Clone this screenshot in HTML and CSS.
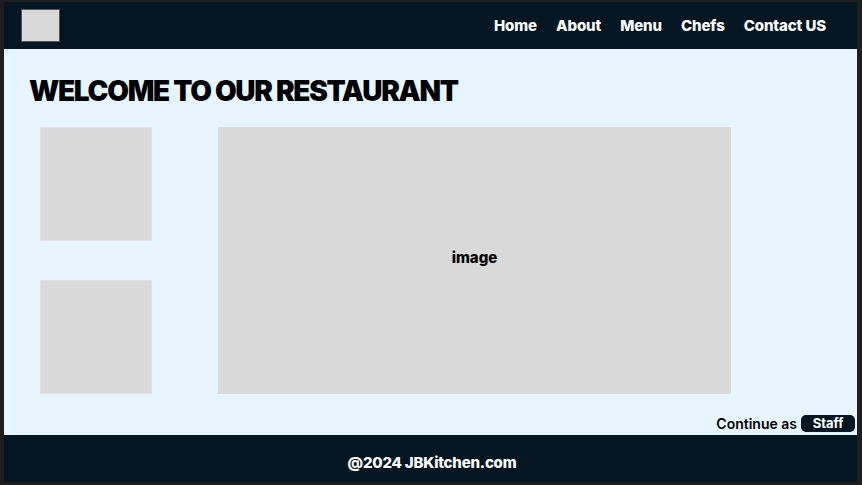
FILE: index.html
```html
<!DOCTYPE html>
<html lang="en">
<head>
<meta charset="utf-8">
<title>JBKitchen</title>
<link rel="stylesheet" href="styles.css">
</head>
<body>
<div class="frame">
  <header class="topbar">
    <div class="logo"></div>
    <nav class="nav">
      <a href="#">Home</a>
      <a href="#">About</a>
      <a href="#">Menu</a>
      <a href="#">Chefs</a>
      <a href="#">Contact US</a>
    </nav>
  </header>
  <main class="main">
    <h1 class="title">WELCOME TO OUR RESTAURANT</h1>
    <section class="gallery">
      <div class="thumbs">
        <div class="thumb"></div>
        <div class="thumb"></div>
      </div>
      <div class="hero">image</div>
    </section>
    <div class="continue">
      <span>Continue as</span>
      <button class="staff">Staff</button>
    </div>
  </main>
  <footer class="footer">@2024 JBKitchen.com</footer>
</div>
</body>
</html>
```

FILE: styles.css
```css
* { box-sizing: border-box; }
html, body { margin: 0; height: 100%; }
body {
  background: #1f1e1c;
  padding: 2px 5px 3px 4px;
  font-family: Inter, "Open Sans", sans-serif;
}
.frame {
  height: 100%;
  display: flex;
  flex-direction: column;
}
.topbar {
  height: 47px;
  background: #041622;
  display: flex;
  align-items: center;
  justify-content: space-between;
  padding: 0 31px 0 17px;
}
.logo {
  width: 39px;
  height: 33px;
  background: #d9d9d9;
  border: 1px solid #555;
  margin-top: -1px;
}
.nav {
  display: flex;
  gap: 19px;
}
.nav a {
  color: #fff;
  text-decoration: none;
  font-weight: 800;
  font-size: 15px;
  letter-spacing: -0.1px;
}
.main {
  flex: 1;
  background: #e6f5fd;
  display: flex;
  flex-direction: column;
  padding: 28px 2px 3px 25px;
}
.title {
  margin: 0;
  font-size: 28px;
  line-height: 29px;
  font-weight: 900;
  letter-spacing: -1.3px;
  color: #000;
}
.gallery {
  display: flex;
  gap: 66px;
  margin: 21px 0 0 11px;
}
.thumbs {
  display: flex;
  flex-direction: column;
  gap: 39px;
}
.thumb {
  width: 112px;
  height: 114px;
  background: #d9d9d9;
  border: 1px solid #e0e0e0;
}
.hero {
  width: 513px;
  height: 267px;
  background: #d9d9d9;
  display: flex;
  align-items: center;
  justify-content: center;
  font-weight: 800;
  font-size: 15px;
  color: #000;
  padding-bottom: 7px;
}
.continue {
  margin-top: auto;
  display: flex;
  justify-content: flex-end;
  align-items: center;
  gap: 4px;
  font-size: 14px;
  font-weight: 600;
  color: #000;
}
.staff {
  width: 54px;
  height: 17px;
  border: none;
  border-radius: 5px;
  background: #041622;
  color: #fff;
  font-family: inherit;
  font-weight: 700;
  font-size: 13px;
  padding: 0;
  line-height: 17px;
}
.footer {
  height: 47px;
  background: #041622;
  color: #fff;
  font-weight: 800;
  font-size: 15px;
  letter-spacing: -0.2px;
  display: flex;
  align-items: center;
  justify-content: center;
  padding-top: 7px;
  padding-left: 3px;
}
```
